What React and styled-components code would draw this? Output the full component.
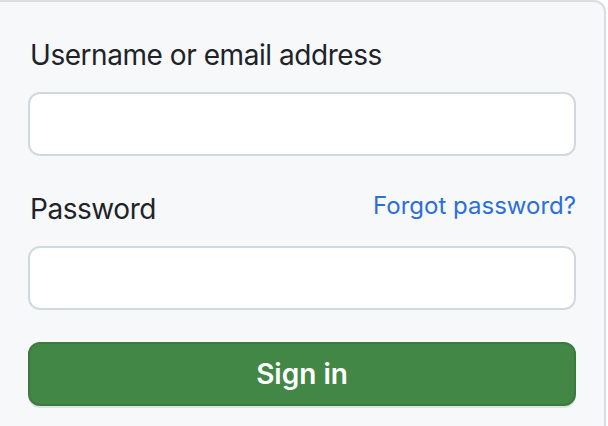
import React from "react";
import styled, { createGlobalStyle } from "styled-components";

const Global = createGlobalStyle`
  html, body {
    margin: 0;
    padding: 0;
    background: #ffffff;
    overflow: hidden;
  }
  body {
    font-family: Inter, "Liberation Sans", sans-serif;
    color: #1f2328;
  }
`;

const Card = styled.form`
  box-sizing: border-box;
  width: 606px;
  min-height: 440px;
  padding: 32px 28px 32px 28px;
  background: #f6f8fa;
  border-top: 2px solid #d8dee4;
  border-right: 2px solid #d8dee4;
  border-top-right-radius: 12px;
  display: flex;
  flex-direction: column;
`;

const LabelRow = styled.div`
  display: flex;
  justify-content: space-between;
  align-items: flex-start;
`;

const Label = styled.label`
  display: block;
  font-size: 28px;
  line-height: 42px;
  font-weight: 400;
  letter-spacing: -0.45px;
  color: #1f2328;
  padding-left: 2px;
`;

const ForgotLink = styled.a`
  font-size: 24px;
  line-height: 36px;
  color: #2b6fd9;
  text-decoration: none;
  cursor: pointer;
`;

const Input = styled.input`
  box-sizing: border-box;
  width: 100%;
  height: 64px;
  margin: 16px 0 32px;
  padding: 0 20px;
  background: #ffffff;
  border: 2px solid #d1d9e0;
  border-radius: 12px;
  font-size: 28px;
  font-family: inherit;
  outline: none;
`;

const Button = styled.button`
  box-sizing: border-box;
  width: 100%;
  height: 64px;
  background: #438746;
  border: 2px solid #3b7a3f;
  border-radius: 12px;
  color: #ffffff;
  font-family: inherit;
  font-size: 28px;
  font-weight: 600;
  cursor: pointer;
  box-shadow: 0 2px 0 rgba(31, 35, 40, 0.1);
`;

export default function App() {
  return (
    <>
      <Global />
      <Card onSubmit={(e) => e.preventDefault()}>
        <Label htmlFor="login">Username or email address</Label>
        <Input id="login" type="text" />
        <LabelRow>
          <Label htmlFor="password">Password</Label>
          <ForgotLink>Forgot password?</ForgotLink>
        </LabelRow>
        <Input id="password" type="password" />
        <Button type="submit">Sign in</Button>
      </Card>
    </>
  );
}
